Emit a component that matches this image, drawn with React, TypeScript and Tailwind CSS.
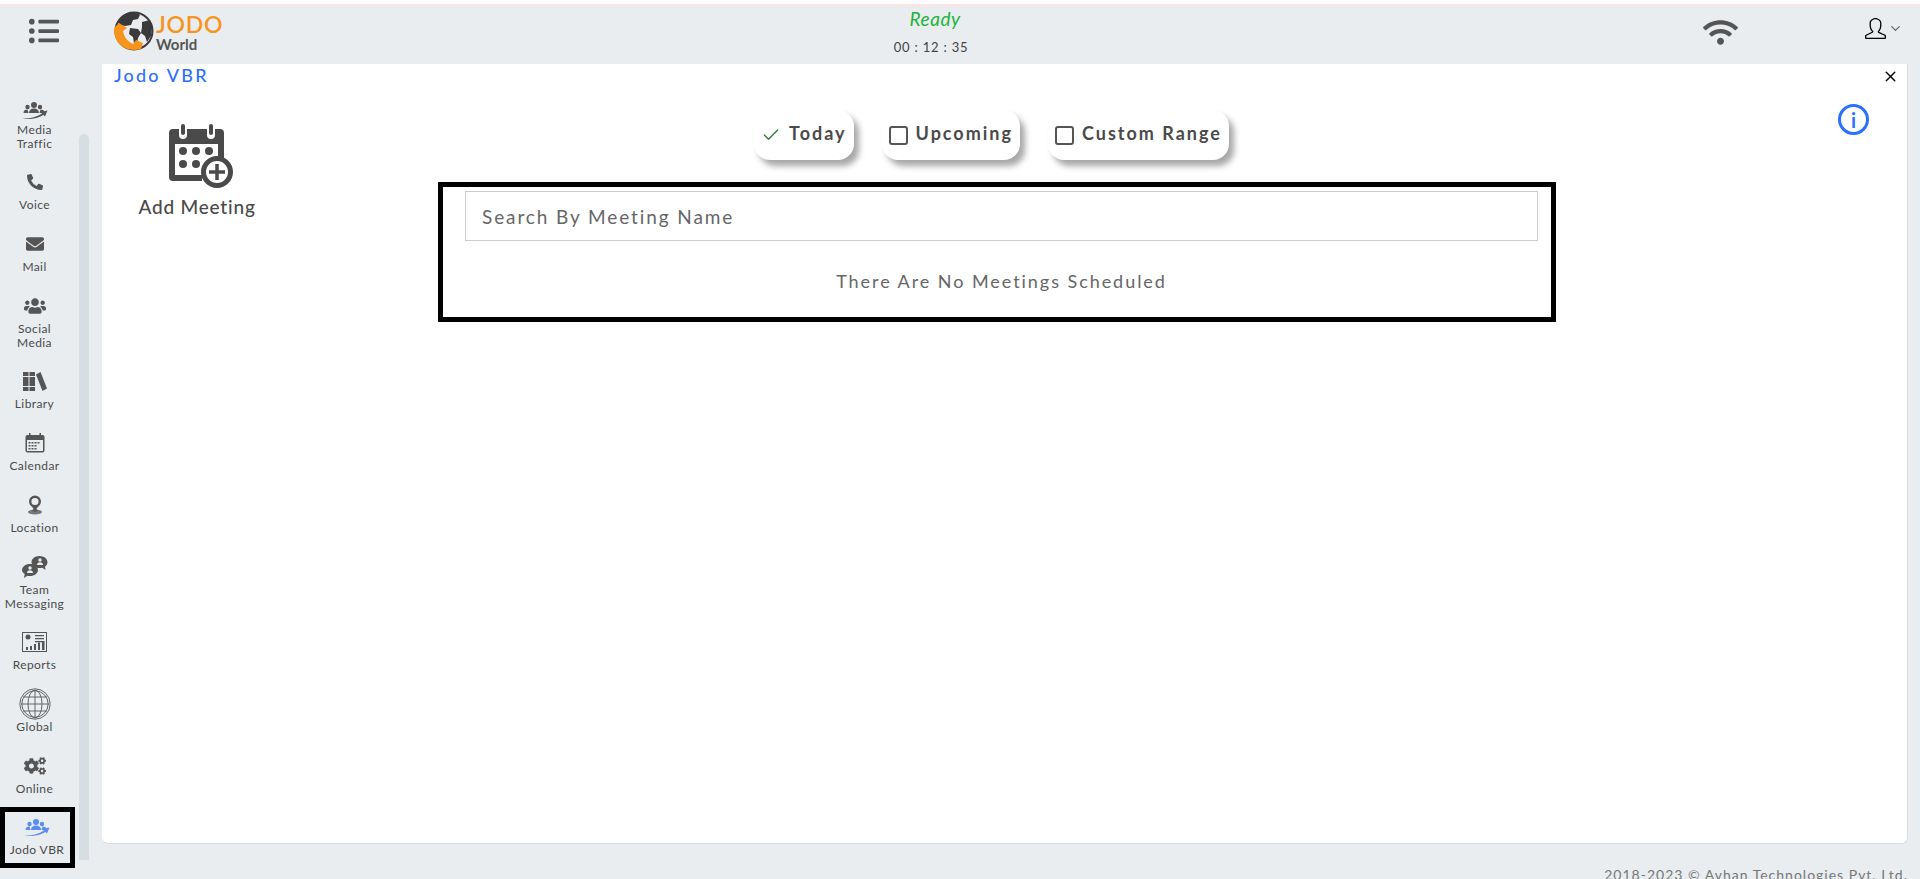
import { Check, ChevronDown, X } from 'lucide-react';
import { FaCogs, FaEnvelope, FaListUl, FaPhoneAlt, FaUsers, FaWifi } from 'react-icons/fa';
import { SlUser } from 'react-icons/sl';
import type { ReactNode } from 'react';

const bodyFont = "font-['Lato','Open_Sans',sans-serif]";

function TrafficIcon({ color = '#555' }: { color?: string }) {
  return (
    <svg width="26" height="17" viewBox="0 0 26 17" fill={color}>
      <circle cx="12" cy="3" r="3" />
      <circle cx="5.500" cy="5" r="2.200" />
      <circle cx="18" cy="5" r="2.200" />
      <path d="M7 11c0-3 2-4.500 5-4.500s5 1.500 5 4.500z" />
      <path d="M1.500 11c0-2.500 1.500-3.500 4-3.500l1 3.500zM17.500 11l1-3.500c2 0 3.500.8 4 2l-1.500 1.500z" />
      <path d="M0 16.500c7 .5 14-1 20-5l-1.500-1.500 7-1.500-2.500 6-1.500-1.500c-6 3.500-14 5-21.500 3.500z" />
    </svg>
  );
}

function LibraryIcon() {
  return (
    <svg width="24" height="19" viewBox="0 0 24 19" fill="#555">
      <rect x="0" y="0" width="5.500" height="19" />
      <rect x="6.500" y="0" width="5.500" height="19" />
      <path d="M13 2.500 17.500 0 24 16.500 19.500 19z" />
      <path d="M0 4h12v1H0zM0 14h12v1H0z" fill="#e9edf0" />
    </svg>
  );
}

function CalendarIcon() {
  return (
    <svg width="20" height="20" viewBox="0 0 20 20">
      <rect x="0.500" y="2" width="19" height="17.500" rx="2" fill="#555" />
      <rect x="2" y="7" width="16" height="11" fill="#e9edf0" />
      <rect x="4" y="0" width="1.500" height="4" fill="#555" />
      <rect x="14.500" y="0" width="1.500" height="4" fill="#555" />
      <path d="M3.500 9h2v1.500h-2zM6.500 9h2v1.500h-2zM9.500 9h2v1.500h-2zM12.500 9h2v1.500h-2zM3.500 12h2v1.500h-2zM6.500 12h2v1.500h-2zM9.500 12h2v1.500h-2zM3.500 15h2v1.500h-2zM6.500 15h2v1.500h-2zM9.500 15h2v1.500h-2z" fill="#555" />
    </svg>
  );
}

function PinIcon() {
  return (
    <svg width="16" height="20" viewBox="0 0 16 20" fill="none">
      <circle cx="8" cy="6.500" r="4.800" stroke="#555" strokeWidth="2.400" />
      <path d="M4.500 11 8 16l3.500-5z" fill="#555" />
      <ellipse cx="8" cy="17" rx="7" ry="2.500" fill="#777" />
      <path d="M5 15.500 8 17l3-1.500L8 13z" fill="#555" />
    </svg>
  );
}

function TeamIcon() {
  return (
    <svg width="26" height="22" viewBox="0 0 26 22" fill="#555">
      <path d="M17.500 0c4.500 0 8 2.800 8 6.200 0 1.800-1 3.400-2.500 4.500l.5 3.300-3.300-2.200c-.8.200-1.700.3-2.700.3-4.500 0-8-2.700-8-6S13 0 17.500 0z" />
      <path d="M8 8c4.400 0 8 2.700 8 6s-3.600 6-8 6c-.9 0-1.800-.1-2.600-.3L2 22l.7-4C1 16.900 0 15.500 0 14c0-3.300 3.600-6 8-6z" />
      <circle cx="18" cy="4" r="1.700" fill="#e9edf0" />
      <path d="M15 9c0-1.700 1.300-2.700 3-2.700s3 1 3 2.700z" fill="#e9edf0" />
      <circle cx="8" cy="12" r="1.700" fill="#e9edf0" />
      <path d="M5 17c0-1.700 1.300-2.700 3-2.700s3 1 3 2.700z" fill="#e9edf0" />
    </svg>
  );
}

function ReportsIcon() {
  return (
    <svg width="25" height="20" viewBox="0 0 25 20" fill="#555">
      <path d="M0 0h25v20H0zM1 1v18h23V1z" fillRule="evenodd" />
      <circle cx="6" cy="5" r="2.500" />
      <path d="M13 3h9v1.200h-9zM13 6h9v1.200h-9zM13 9h9v1.200h-9z" />
      <path d="M4 15h2v3H4zM8 14h2v4H8zM12 12h2v6h-2zM16 10.500h2V18h-2zM20 9h2.500v9H20z" />
    </svg>
  );
}

function GlobeIcon() {
  return (
    <svg width="32" height="32" viewBox="0 0 32 32" fill="none" stroke="#666" strokeWidth="1">
      <circle cx="16" cy="16" r="15.200" />
      <circle cx="16" cy="16" r="13.200" />
      <ellipse cx="16" cy="16" rx="7" ry="14" />
      <path d="M16 2v28M2 16h28M4 9h24M4 23h24" />
    </svg>
  );
}

function LogoMark() {
  return (
    <svg width="42" height="40" viewBox="0 0 42 40">
      <circle cx="21" cy="20" r="18.500" fill="none" stroke="#3a3a3a" strokeWidth="2" />
      <path d="M12 4c5-3 13-3 15 0l-2 4-5 1-2 5-6 1-5-1-2-3c1-3 4-5 7-7z" fill="#3a3a3a" />
      <path d="M17 17l8 1 3 4-3 5-1 6-3-1-1-6-4-3z" fill="#3a3a3a" />
      <path d="M29 11l8-2 2 8-1 8-4 6-2-6-4-3 1-6z" fill="#3a3a3a" />
      <path d="M6 12 1 17c-.5 8 3 15 9 19 5 3 12 4 18 2l2-6-7-3-3 4c-5-2-9-7-10-13l4-3z" fill="#f7941d" />
    </svg>
  );
}

function AddMeetingIcon() {
  return (
    <svg width="64" height="64" viewBox="0 0 64 64" className="ml-[7px]">
      <path d="M4 5h6v6a4 4 0 0 0 8 0V5h20v6a4 4 0 0 0 8 0V5h5a4 4 0 0 1 4 4v25h-6V20H6v31h27v6H4a4 4 0 0 1-4-4V9a4 4 0 0 1 4-4z" fill="#4a4a4a" />
      <rect x="12" y="0" width="4" height="11" rx="2" fill="#4a4a4a" />
      <rect x="40" y="0" width="4" height="11" rx="2" fill="#4a4a4a" />
      <circle cx="14" cy="27" r="4" fill="#4a4a4a" />
      <circle cx="27" cy="27" r="4" fill="#4a4a4a" />
      <circle cx="40" cy="27" r="4" fill="#4a4a4a" />
      <circle cx="14" cy="40" r="4" fill="#4a4a4a" />
      <circle cx="27" cy="40" r="4" fill="#4a4a4a" />
      <circle cx="48" cy="48" r="13.500" fill="#fff" stroke="#4a4a4a" strokeWidth="5" />
      <path d="M48 40v16M40 48h16" stroke="#4a4a4a" strokeWidth="3.500" />
    </svg>
  );
}

function TwoLine({ first, second }: { first: string; second: string }) {
  return (
    <span className="-mb-px block">
      {first}
      <br />
      {second}
    </span>
  );
}

function NavItem({ icon, label, boxed }: { icon: ReactNode; label: ReactNode; boxed?: boolean }) {
  return (
    <div className={`flex w-[75px] flex-col items-center text-center text-[12px] leading-[14px] tracking-[0.4px] whitespace-nowrap text-[#4a4a4a] ${boxed ? '-mt-[3px] h-[61px] border-[5px] border-black pt-[3px] pr-[1px]' : 'pt-[6px] pr-[6px] pb-[14px]'}`}>
      <div className="mb-[4px] flex h-[24px] items-center justify-center">{icon}</div>
      <div>{label}</div>
    </div>
  );
}

function RangeOption({ label, checked }: { label: string; checked?: boolean }) {
  return (
    <div className="flex h-[50px] items-center gap-[8px] rounded-2xl bg-white px-[7px] shadow-[5px_6px_6px_rgba(0,0,0,0.35)]">
      {checked ? (
        <Check size={20} strokeWidth={1.6} className="text-[#2e7d32]" />
      ) : (
        <span className="h-[19px] w-[19px] rounded-[3px] border-2 border-[#555]" />
      )}
      <span className="pb-[4px] text-[18px] font-bold tracking-[2px] text-[#4a4a4a]">{label}</span>
    </div>
  );
}

export default function App() {
  return (
    <div className={`flex h-[879px] flex-col overflow-hidden bg-[#e9edf0] ${bodyFont}`}>
      {/* Top strip */}
      <div className="h-[6px] shrink-0 border-b-2 border-[#fde3e3] bg-white" />

      {/* Header */}
      <header className="flex h-[58px] shrink-0 items-start">
        <div className="flex w-[89px] justify-center pt-[10px] pr-[1px] text-[#555]">
          <FaListUl size={30} />
        </div>
        <div className="ml-[24px] flex items-center gap-[1px] pt-[4px]">
          <LogoMark />
          <div className="flex flex-col pt-[1px]">
            <span className="text-[23px] leading-[26px] font-semibold tracking-[0.7px] text-[#f7941d]">JODO</span>
            <span className="text-[15px] leading-[15px] font-bold text-[#555]">World</span>
          </div>
        </div>
        <div className="ml-[637px] flex w-[150px] flex-col items-center pt-[2px]">
          <span className="text-[19px] leading-[22px] tracking-[0.6px] text-[#22b33a] italic">Ready</span>
          <span className="mt-[8px] -translate-x-[4px] text-[13px] tracking-[0.8px] text-[#444]">00 : 12 : 35</span>
        </div>
        <div className="ml-[693px] pt-[9px] text-[#555]">
          <FaWifi size={35} />
        </div>
        <div className="ml-[127px] flex items-center gap-[2px] pt-[12px] text-black">
          <SlUser size={21} />
          <ChevronDown size={15} className="text-[#666]" />
        </div>
      </header>

      <div className="flex min-h-0 flex-1">
        {/* Sidebar */}
        <nav className="flex w-[79px] flex-col items-start pt-[25px]">
          <NavItem icon={<div className="translate-y-[3px]"><TrafficIcon /></div>} label={<TwoLine first="Media" second="Traffic" />} />
          <NavItem icon={<FaPhoneAlt size={16} color="#555" />} label="Voice" />
          <NavItem icon={<FaEnvelope size={18} color="#555" />} label="Mail" />
          <NavItem icon={<FaUsers size={22} color="#555" />} label={<TwoLine first="Social" second="Media" />} />
          <NavItem icon={<LibraryIcon />} label="Library" />
          <NavItem icon={<CalendarIcon />} label="Calendar" />
          <NavItem icon={<PinIcon />} label="Location" />
          <NavItem icon={<TeamIcon />} label={<TwoLine first="Team" second="Messaging" />} />
          <NavItem icon={<ReportsIcon />} label="Reports" />
          <NavItem icon={<GlobeIcon />} label="Global" />
          <NavItem icon={<FaCogs size={22} color="#555" />} label="Online" />
          <NavItem boxed icon={<TrafficIcon color="#5b8def" />} label="Jodo VBR" />
        </nav>

        {/* Scrollbar */}
        <div className="mt-[70px] h-[726px] w-[10px] rounded-t-[5px] bg-[#d6dee1]" />

        {/* Content */}
        <div className="ml-[13px] flex flex-col">
          <main className="relative h-[780px] w-[1806px] shrink-0 rounded-b-[6px] border-r border-b border-[#d8dde0] bg-white pl-[12px]">
            <h1 className="h-[46px] text-[18px] leading-[22px] font-medium tracking-[2.2px] text-[#2b6fff]">Jodo VBR</h1>
            <button className="absolute top-[4px] right-[8px] text-black">
              <X size={17} strokeWidth={2} />
            </button>
            <div className="absolute top-[40px] right-[38px] flex h-[31px] w-[31px] items-center justify-center rounded-full border-[3px] border-[#2b6fff] text-[20px] leading-none font-bold text-[#2b6fff]">
              i
            </div>
            <div className="flex">
              <div className="flex w-[166px] flex-col items-center pt-[14px]">
                <AddMeetingIcon />
                <span className="mt-[5px] text-[19px] font-medium tracking-[0.8px] whitespace-nowrap text-[#4a4a4a]">Add Meeting</span>
              </div>
              <div className="ml-[158px] flex w-[1118px] flex-col">
                <div className="flex h-[50px] gap-[28px] pl-[316px]">
                  <RangeOption checked label="Today" />
                  <RangeOption label="Upcoming" />
                  <RangeOption label="Custom Range" />
                </div>
                <div className="mt-[22px] flex h-[140px] flex-col border-[5px] border-black pt-[4px] pr-[13px] pl-[22px]">
                  <input
                    type="text"
                    placeholder="Search By Meeting Name"
                    className="h-[50px] w-full border border-[#ccc] px-[16px] text-[19px] tracking-[1.9px] text-[#555] placeholder:text-[#666] focus:outline-none"
                  />
                  <p className="mt-[27px] text-center text-[18px] tracking-[1.95px] text-[#666]">There Are No Meetings Scheduled</p>
                </div>
              </div>
            </div>
          </main>
          <div className="mt-[20px] text-right text-[14px] tracking-[1px] whitespace-nowrap text-[#777]">2018-2023 © Avhan Technologies Pvt. Ltd.</div>
        </div>
      </div>
    </div>
  );
}
